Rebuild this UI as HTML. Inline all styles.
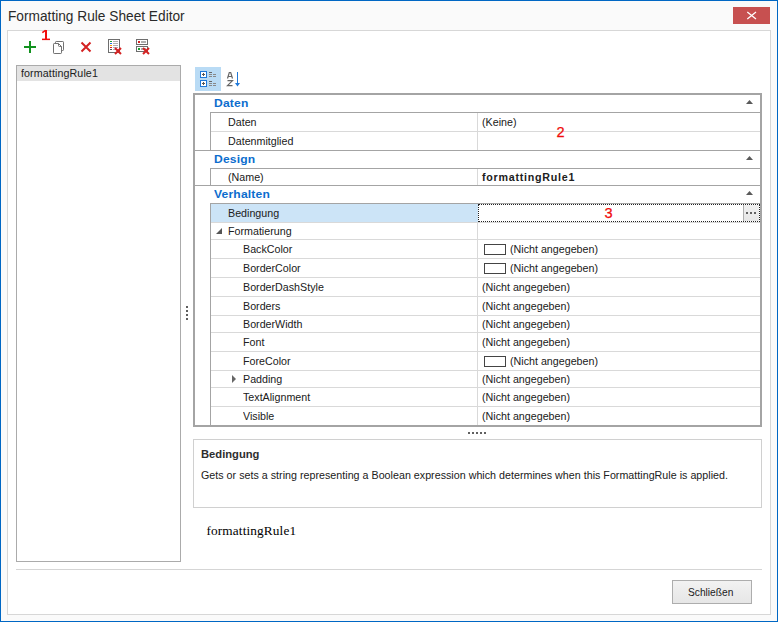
<!DOCTYPE html>
<html><head><meta charset="utf-8"><style>
html,body{margin:0;padding:0;}
body{width:778px;height:622px;position:relative;overflow:hidden;background:#fafafa;font-family:"Liberation Sans", sans-serif;}
body>div,body>svg{position:absolute;}
.t{white-space:nowrap;line-height:20px;}
</style></head><body>
<div style="left:0px;top:0px;width:778px;height:622px;background:#fafafa;"></div>
<div style="left:0px;top:0px;width:778px;height:1px;background:#0067c4"></div>
<div style="left:0px;top:621px;width:778px;height:1px;background:#0067c4"></div>
<div style="left:0px;top:0px;width:1px;height:622px;background:#0067c4"></div>
<div style="left:777px;top:0px;width:1px;height:622px;background:#0067c4"></div>
<div class="t" style="left:7.6px;top:6px;font-size:14.4px;font-weight:normal;color:#2a2a2a;font-family:'Liberation Sans', sans-serif;transform:scaleX(0.952);transform-origin:0 0;">Formatting Rule Sheet Editor</div>
<div style="left:733px;top:7px;width:37px;height:17px;background:#c75050;"></div>
<svg style="left:746px;top:11px" width="11" height="10" viewBox="0 0 11 10"><path d="M1.3 0.9 L10 8 M10 0.9 L1.3 8" stroke="#fff" stroke-width="1.25"/></svg>
<div style="left:7px;top:30px;width:764px;height:585px;background:#fff;border:1px solid #d7d7d7;box-sizing:border-box;"></div>
<svg style="left:24px;top:41px" width="12" height="12"><rect x="0" y="5" width="12" height="2" fill="#12921f"/><rect x="5" y="0" width="2" height="12" fill="#12921f"/></svg>
<svg style="left:40px;top:28px" width="12" height="14" viewBox="0 0 12 14"><path d="M2.3 4.6 L5.6 2.3" stroke="#f00c0c" stroke-width="1.6" fill="none"/><rect x="5" y="2" width="2" height="10" fill="#f00c0c"/><rect x="2" y="10.6" width="8" height="1.5" fill="#f00c0c"/></svg>
<svg style="left:52px;top:40px" width="14" height="16" viewBox="0 0 14 16"><path d="M3.5 3.5 V2.2 Q3.5 1.5 4.2 1.5 H10.8 Q11.5 1.5 11.5 2.2 V9.8 Q11.5 10.5 10.8 10.5 H9.5" fill="none" stroke="#727272" stroke-width="1"/><path d="M1.5 4.2 Q1.5 3.5 2.2 3.5 H6.5 L9.5 6.5 V12.8 Q9.5 13.5 8.8 13.5 H2.2 Q1.5 13.5 1.5 12.8 Z" fill="#fff" stroke="#727272" stroke-width="1"/><path d="M6.5 3.5 V5.5 Q6.5 6.5 7.5 6.5 H9.5" fill="none" stroke="#727272" stroke-width="1"/></svg>
<svg style="left:80px;top:41px" width="12" height="12" viewBox="0 0 12 12"><path d="M1.5 1.5 L10.5 10.5 M10.5 1.5 L1.5 10.5" stroke="#d42222" stroke-width="2"/></svg>
<svg style="left:107px;top:38px" width="16" height="18" viewBox="0 0 16 18"><rect x="1.5" y="1.5" width="11" height="13" fill="#fff" stroke="#6e6e6e" stroke-width="1"/><rect x="3" y="3" width="2" height="1" fill="#1aa031"/><rect x="6" y="3" width="5" height="1" fill="#b0b0b0"/><rect x="3" y="5" width="2" height="1" fill="#1f78e0"/><rect x="6" y="5" width="5" height="1" fill="#b0b0b0"/><rect x="3" y="7" width="2" height="1" fill="#f0a000"/><rect x="6" y="7" width="5" height="1" fill="#b0b0b0"/><rect x="3" y="9" width="2" height="1" fill="#d42020"/><rect x="6" y="9" width="5" height="1" fill="#b0b0b0"/><rect x="3" y="11" width="2" height="1" fill="#555"/><rect x="6" y="11" width="5" height="1" fill="#b0b0b0"/><path d="M8 10 L14 16 M14 10 L8 16" stroke="#d42222" stroke-width="2"/></svg>
<svg style="left:135px;top:38px" width="16" height="18" viewBox="0 0 16 18"><rect x="1.5" y="1.5" width="11" height="5" fill="#fff" stroke="#6e6e6e" stroke-width="1"/><rect x="1.5" y="8.5" width="11" height="5" fill="#fff" stroke="#6e6e6e" stroke-width="1"/><rect x="3" y="3" width="2" height="2" fill="#d42020"/><rect x="6" y="3" width="5" height="2" fill="#b0b0b0"/><rect x="3" y="10" width="2" height="2" fill="#1aa031"/><rect x="6" y="10" width="5" height="2" fill="#b0b0b0"/><path d="M8 10 L14 16 M14 10 L8 16" stroke="#d42222" stroke-width="2"/></svg>
<div style="left:16px;top:65px;width:165px;height:497px;border:1px solid #ababab;box-sizing:border-box;background:#fff;"></div>
<div style="left:17px;top:66px;width:163px;height:15px;background:#e3e3e3;"></div>
<div class="t" style="left:21px;top:63px;font-size:11.1px;font-weight:normal;color:#202020;font-family:'Liberation Sans', sans-serif;transform:scaleX(0.964);transform-origin:0 0;letter-spacing:0.1px;">formattingRule1</div>
<div style="left:186px;top:306px;width:2px;height:2px;background:#5e5e5e"></div>
<div style="left:186px;top:310px;width:2px;height:2px;background:#5e5e5e"></div>
<div style="left:186px;top:314px;width:2px;height:2px;background:#5e5e5e"></div>
<div style="left:186px;top:318px;width:2px;height:2px;background:#5e5e5e"></div>
<div style="left:195px;top:67px;width:26px;height:24px;background:#b9dbf5;"></div>
<svg style="left:199px;top:70px" width="20" height="18" viewBox="0 0 20 18"><rect x="1.5" y="1.5" width="6" height="6" fill="#fff" stroke="#1f78d8" stroke-width="1"/><rect x="1.5" y="10.5" width="6" height="6" fill="#fff" stroke="#1f78d8" stroke-width="1"/><path d="M3 4.5 H6 M4.5 3 V6 M3 13.5 H6 M4.5 12 V15" stroke="#555" stroke-width="1"/><rect x="10" y="2" width="3" height="1" fill="#666"/><rect x="10" y="4" width="3" height="1" fill="#888"/><rect x="14" y="4" width="3" height="1" fill="#888"/><rect x="10" y="6" width="3" height="1" fill="#888"/><rect x="14" y="6" width="3" height="1" fill="#888"/><rect x="10" y="11" width="3" height="1" fill="#666"/><rect x="10" y="13" width="3" height="1" fill="#888"/><rect x="14" y="13" width="3" height="1" fill="#888"/><rect x="10" y="15" width="3" height="1" fill="#888"/><rect x="14" y="15" width="3" height="1" fill="#888"/></svg>
<svg style="left:226px;top:71px" width="16" height="17" viewBox="0 0 16 17"><path d="M1.5 7.5 L3.3 1.5 H4.7 L6.5 7.5 M2.5 5.5 H5.5" fill="none" stroke="#666" stroke-width="1.2"/><path d="M1.5 9.6 H6.5 L1.5 14.6 H6.5" fill="none" stroke="#666" stroke-width="1.2"/><path d="M11.5 1 V14" stroke="#1f78d8" stroke-width="1"/><path d="M9 12 L11.5 15.5 L14 12 Z" fill="#1f78d8"/></svg>
<div style="left:193px;top:93px;width:569px;height:334px;border:2px solid #a4a4a4;box-sizing:border-box;background:#fff;"></div>
<div class="t" style="left:214px;top:93px;font-size:11px;font-weight:bold;color:#0c6dce;font-family:'Liberation Sans', sans-serif;transform:scaleX(1.1);transform-origin:0 0;letter-spacing:0.15px;">Daten</div>
<svg style="left:746px;top:100px" width="7" height="4"><path d="M0 4 L3.5 0 L7 4 Z" fill="#5a5a5a"/></svg>
<div style="left:210px;top:112px;width:550px;height:1px;background:#a4a4a4"></div>
<div style="left:211px;top:131px;width:549px;height:1px;background:#d9d9d9"></div>
<div style="left:195px;top:150px;width:565px;height:1px;background:#a4a4a4"></div>
<div class="t" style="left:214px;top:149px;font-size:11px;font-weight:bold;color:#0c6dce;font-family:'Liberation Sans', sans-serif;transform:scaleX(1.1);transform-origin:0 0;letter-spacing:0.15px;">Design</div>
<svg style="left:746px;top:156px" width="7" height="4"><path d="M0 4 L3.5 0 L7 4 Z" fill="#5a5a5a"/></svg>
<div style="left:210px;top:168px;width:550px;height:1px;background:#a4a4a4"></div>
<div style="left:195px;top:185px;width:565px;height:1px;background:#a4a4a4"></div>
<div class="t" style="left:214px;top:184px;font-size:11px;font-weight:bold;color:#0c6dce;font-family:'Liberation Sans', sans-serif;transform:scaleX(1.1);transform-origin:0 0;letter-spacing:0.15px;">Verhalten</div>
<svg style="left:746px;top:191px" width="7" height="4"><path d="M0 4 L3.5 0 L7 4 Z" fill="#5a5a5a"/></svg>
<div style="left:210px;top:203px;width:550px;height:1px;background:#a4a4a4"></div>
<div style="left:211px;top:222px;width:549px;height:1px;background:#d9d9d9"></div>
<div style="left:211px;top:239px;width:549px;height:1px;background:#d9d9d9"></div>
<div style="left:211px;top:258px;width:549px;height:1px;background:#d9d9d9"></div>
<div style="left:211px;top:277px;width:549px;height:1px;background:#d9d9d9"></div>
<div style="left:211px;top:296px;width:549px;height:1px;background:#d9d9d9"></div>
<div style="left:211px;top:315px;width:549px;height:1px;background:#d9d9d9"></div>
<div style="left:211px;top:332px;width:549px;height:1px;background:#d9d9d9"></div>
<div style="left:211px;top:351px;width:549px;height:1px;background:#d9d9d9"></div>
<div style="left:211px;top:370px;width:549px;height:1px;background:#d9d9d9"></div>
<div style="left:211px;top:387px;width:549px;height:1px;background:#d9d9d9"></div>
<div style="left:211px;top:406px;width:549px;height:1px;background:#d9d9d9"></div>
<div style="left:210px;top:112px;width:1px;height:39px;background:#a4a4a4"></div>
<div style="left:210px;top:168px;width:1px;height:18px;background:#a4a4a4"></div>
<div style="left:210px;top:203px;width:1px;height:222px;background:#a4a4a4"></div>
<div style="left:477px;top:113px;width:1px;height:37px;background:#d9d9d9"></div>
<div style="left:477px;top:169px;width:1px;height:16px;background:#d9d9d9"></div>
<div style="left:477px;top:204px;width:1px;height:221px;background:#d9d9d9"></div>
<div style="left:211px;top:204px;width:267px;height:18px;background:#cce4f7;"></div>
<div style="left:478px;top:204px;width:282px;height:18px;box-sizing:border-box;border:1px dotted #222;"></div>
<div style="left:743px;top:205px;width:1px;height:16px;background:#b0b0b0"></div>
<div style="left:744px;top:205px;width:15px;height:16px;background:linear-gradient(#f0f0f0,#e6e6e6)"></div>
<div style="left:746px;top:212px;width:2px;height:2px;background:#606060"></div>
<div style="left:750px;top:212px;width:2px;height:2px;background:#606060"></div>
<div style="left:754px;top:212px;width:2px;height:2px;background:#606060"></div>
<div class="t" style="left:228px;top:112px;font-size:11.1px;font-weight:normal;color:#202020;font-family:'Liberation Sans', sans-serif;transform:scaleX(0.964);transform-origin:0 0;">Daten</div>
<div class="t" style="left:482px;top:112px;font-size:11.1px;font-weight:normal;color:#202020;font-family:'Liberation Sans', sans-serif;transform:scaleX(0.964);transform-origin:0 0;">(Keine)</div>
<div class="t" style="left:228px;top:131px;font-size:11.1px;font-weight:normal;color:#202020;font-family:'Liberation Sans', sans-serif;transform:scaleX(0.964);transform-origin:0 0;">Datenmitglied</div>
<div class="t" style="left:228px;top:167px;font-size:11.1px;font-weight:normal;color:#202020;font-family:'Liberation Sans', sans-serif;transform:scaleX(0.964);transform-origin:0 0;">(Name)</div>
<div class="t" style="left:482px;top:167px;font-size:10.7px;font-weight:bold;color:#202020;font-family:'Liberation Sans', sans-serif;letter-spacing:0.75px;">formattingRule1</div>
<div class="t" style="left:228px;top:203px;font-size:11.1px;font-weight:normal;color:#202020;font-family:'Liberation Sans', sans-serif;transform:scaleX(0.964);transform-origin:0 0;">Bedingung</div>
<div class="t" style="left:228px;top:221px;font-size:11.1px;font-weight:normal;color:#202020;font-family:'Liberation Sans', sans-serif;transform:scaleX(0.964);transform-origin:0 0;">Formatierung</div>
<svg style="left:216px;top:228px" width="6" height="6"><path d="M6 0 V6 H0 Z" fill="#555"/></svg>
<div class="t" style="left:243px;top:239px;font-size:11.1px;font-weight:normal;color:#202020;font-family:'Liberation Sans', sans-serif;transform:scaleX(0.964);transform-origin:0 0;">BackColor</div>
<div style="left:484px;top:244px;width:22px;height:11px;border:1px solid #444;box-sizing:border-box;background:#fff;"></div>
<div class="t" style="left:510px;top:239px;font-size:11.1px;font-weight:normal;color:#202020;font-family:'Liberation Sans', sans-serif;transform:scaleX(0.964);transform-origin:0 0;">(Nicht angegeben)</div>
<div class="t" style="left:243px;top:258px;font-size:11.1px;font-weight:normal;color:#202020;font-family:'Liberation Sans', sans-serif;transform:scaleX(0.964);transform-origin:0 0;">BorderColor</div>
<div style="left:484px;top:263px;width:22px;height:11px;border:1px solid #444;box-sizing:border-box;background:#fff;"></div>
<div class="t" style="left:510px;top:258px;font-size:11.1px;font-weight:normal;color:#202020;font-family:'Liberation Sans', sans-serif;transform:scaleX(0.964);transform-origin:0 0;">(Nicht angegeben)</div>
<div class="t" style="left:243px;top:277px;font-size:11.1px;font-weight:normal;color:#202020;font-family:'Liberation Sans', sans-serif;transform:scaleX(0.964);transform-origin:0 0;">BorderDashStyle</div>
<div class="t" style="left:482px;top:277px;font-size:11.1px;font-weight:normal;color:#202020;font-family:'Liberation Sans', sans-serif;transform:scaleX(0.964);transform-origin:0 0;">(Nicht angegeben)</div>
<div class="t" style="left:243px;top:296px;font-size:11.1px;font-weight:normal;color:#202020;font-family:'Liberation Sans', sans-serif;transform:scaleX(0.964);transform-origin:0 0;">Borders</div>
<div class="t" style="left:482px;top:296px;font-size:11.1px;font-weight:normal;color:#202020;font-family:'Liberation Sans', sans-serif;transform:scaleX(0.964);transform-origin:0 0;">(Nicht angegeben)</div>
<div class="t" style="left:243px;top:314px;font-size:11.1px;font-weight:normal;color:#202020;font-family:'Liberation Sans', sans-serif;transform:scaleX(0.964);transform-origin:0 0;">BorderWidth</div>
<div class="t" style="left:482px;top:314px;font-size:11.1px;font-weight:normal;color:#202020;font-family:'Liberation Sans', sans-serif;transform:scaleX(0.964);transform-origin:0 0;">(Nicht angegeben)</div>
<div class="t" style="left:243px;top:332px;font-size:11.1px;font-weight:normal;color:#202020;font-family:'Liberation Sans', sans-serif;transform:scaleX(0.964);transform-origin:0 0;">Font</div>
<div class="t" style="left:482px;top:332px;font-size:11.1px;font-weight:normal;color:#202020;font-family:'Liberation Sans', sans-serif;transform:scaleX(0.964);transform-origin:0 0;">(Nicht angegeben)</div>
<div class="t" style="left:243px;top:351px;font-size:11.1px;font-weight:normal;color:#202020;font-family:'Liberation Sans', sans-serif;transform:scaleX(0.964);transform-origin:0 0;">ForeColor</div>
<div style="left:484px;top:356px;width:22px;height:11px;border:1px solid #444;box-sizing:border-box;background:#fff;"></div>
<div class="t" style="left:510px;top:351px;font-size:11.1px;font-weight:normal;color:#202020;font-family:'Liberation Sans', sans-serif;transform:scaleX(0.964);transform-origin:0 0;">(Nicht angegeben)</div>
<div class="t" style="left:243px;top:369px;font-size:11.1px;font-weight:normal;color:#202020;font-family:'Liberation Sans', sans-serif;transform:scaleX(0.964);transform-origin:0 0;">Padding</div>
<div class="t" style="left:482px;top:369px;font-size:11.1px;font-weight:normal;color:#202020;font-family:'Liberation Sans', sans-serif;transform:scaleX(0.964);transform-origin:0 0;">(Nicht angegeben)</div>
<div class="t" style="left:243px;top:387px;font-size:11.1px;font-weight:normal;color:#202020;font-family:'Liberation Sans', sans-serif;transform:scaleX(0.964);transform-origin:0 0;">TextAlignment</div>
<div class="t" style="left:482px;top:387px;font-size:11.1px;font-weight:normal;color:#202020;font-family:'Liberation Sans', sans-serif;transform:scaleX(0.964);transform-origin:0 0;">(Nicht angegeben)</div>
<div class="t" style="left:243px;top:406px;font-size:11.1px;font-weight:normal;color:#202020;font-family:'Liberation Sans', sans-serif;transform:scaleX(0.964);transform-origin:0 0;">Visible</div>
<div class="t" style="left:482px;top:406px;font-size:11.1px;font-weight:normal;color:#202020;font-family:'Liberation Sans', sans-serif;transform:scaleX(0.964);transform-origin:0 0;">(Nicht angegeben)</div>
<svg style="left:232px;top:375px" width="4" height="8"><path d="M0 0 L4 4 L0 8 Z" fill="#666"/></svg>
<div class="t" style="left:556.6px;top:122px;font-size:14.6px;font-weight:normal;color:#f00c0c;font-family:'Liberation Sans', sans-serif;-webkit-text-stroke:0.25px #f00c0c;">2</div>
<div class="t" style="left:604.5px;top:203px;font-size:14.6px;font-weight:normal;color:#f00c0c;font-family:'Liberation Sans', sans-serif;-webkit-text-stroke:0.25px #f00c0c;">3</div>
<div style="left:468px;top:432px;width:2px;height:2px;background:#606060"></div>
<div style="left:472px;top:432px;width:2px;height:2px;background:#606060"></div>
<div style="left:476px;top:432px;width:2px;height:2px;background:#606060"></div>
<div style="left:480px;top:432px;width:2px;height:2px;background:#606060"></div>
<div style="left:484px;top:432px;width:2px;height:2px;background:#606060"></div>
<div style="left:193px;top:439px;width:569px;height:69px;border:1px solid #d0d0d0;box-sizing:border-box;background:#fff;"></div>
<div class="t" style="left:201px;top:444px;font-size:11.2px;font-weight:bold;color:#2e2e2e;font-family:'Liberation Sans', sans-serif;">Bedingung</div>
<div class="t" style="left:201px;top:465px;font-size:11.1px;font-weight:normal;color:#202020;font-family:'Liberation Sans', sans-serif;transform:scaleX(0.964);transform-origin:0 0;letter-spacing:0.014px;">Gets or sets a string representing a Boolean expression which determines when this FormattingRule is applied.</div>
<div class="t" style="left:206.5px;top:521px;font-size:13.3px;font-weight:normal;color:#000;font-family:'Liberation Serif', serif;letter-spacing:0.12px;">formattingRule1</div>
<div style="left:16px;top:569px;width:746px;height:1px;background:#d5d5d5"></div>
<div style="left:672px;top:580px;width:80px;height:24px;border:1px solid #adadad;box-sizing:border-box;background:linear-gradient(#f2f2f2,#e6e6e6);"></div>
<div class="t" style="left:688px;top:583px;font-size:10.2px;font-weight:normal;color:#202020;font-family:'Liberation Sans', sans-serif;">Schließen</div>
</body></html>
